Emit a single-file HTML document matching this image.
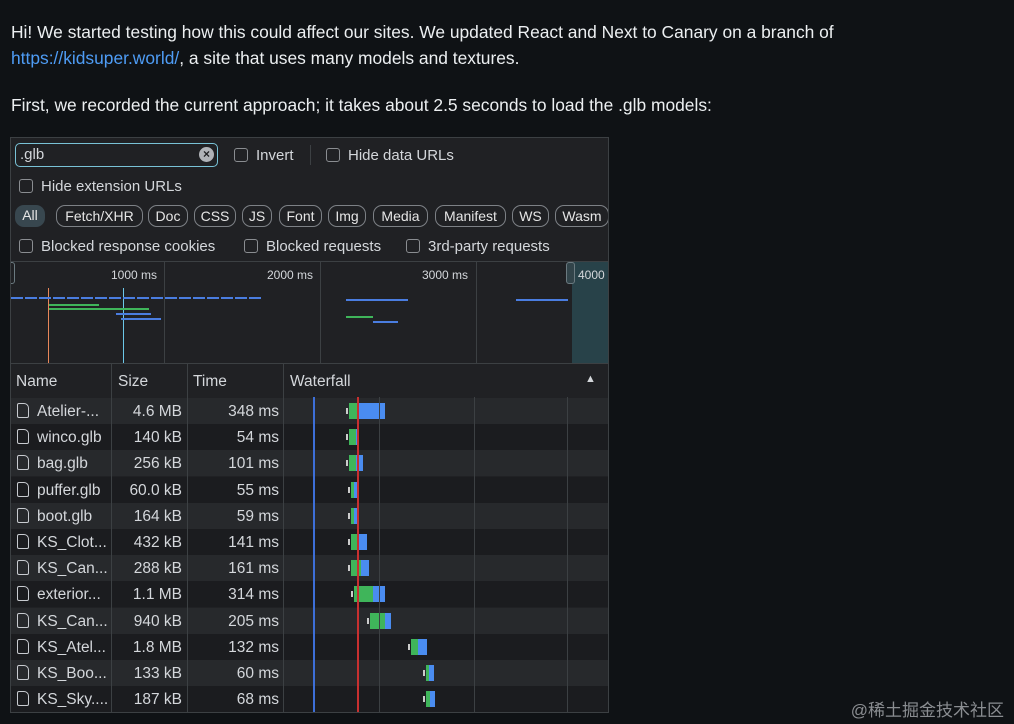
<!DOCTYPE html><html><head><style>
body{margin:0;width:1014px;height:724px;background:#0f1215;font-family:"Liberation Sans",sans-serif;color:#e6e6e6;position:relative;overflow:hidden}
p{position:absolute;left:11px;margin:0;font-size:17.4px;line-height:26px;color:#eceff1}
a{color:#4e9cf5}
.pn{position:absolute;left:10px;top:137px;width:599px;height:576px;background:#202124;border:1px solid #3c4043;box-sizing:border-box;overflow:hidden;font-size:15px;color:#d4d7db}
.ab{position:absolute;white-space:nowrap}
.cb{display:inline-block;width:14px;height:14px;border:1px solid #8a8d91;border-radius:3px;vertical-align:-2px;margin-right:8px;box-sizing:border-box}
.chip{position:absolute;top:67px;height:22px;border:1px solid #7d8186;border-radius:9px;box-sizing:border-box;font-size:14px;line-height:20px;text-align:center;color:#e6e6e6}
.row{position:absolute;left:0;width:599px;height:26px;font-size:15.5px}
.hd{position:absolute;top:225px;left:0;width:599px;height:34px;border-top:1px solid #3c4043;border-bottom:1px solid #3c4043;font-size:15.5px}
.vl{position:absolute;width:1px;background:#3c4043}
.bar{position:absolute;height:16px;top:5px}
.doc{position:absolute;left:6px;top:5px;width:12px;height:15px;border:1.5px solid #c8cbd0;border-radius:2px 5px 2px 2px;box-sizing:border-box}
</style></head><body>
<p style="top:19px">Hi! We started testing how this could affect our sites. We updated React and Next to Canary on a branch of<br><a>https://kidsuper.world/</a>, a site that uses many models and textures.</p>
<p style="top:92px">First, we recorded the current approach; it takes about 2.5 seconds to load the .glb models:</p>
<div class="pn">
<div class="ab" style="left:4px;top:5px;width:203px;height:24px;border:1.5px solid #79c2d6;border-radius:5px;box-sizing:border-box;padding-left:4px;line-height:22px;font-size:15px">.glb<span style="position:absolute;right:3px;top:3px;width:15px;height:15px;border-radius:50%;background:#b0b3b8;color:#202124;font-size:12px;line-height:15px;text-align:center;font-weight:bold">×</span></div>
<div class="ab" style="left:223px;top:9px"><span class="cb"></span>Invert</div>
<div class="vl" style="left:299px;top:7px;height:20px"></div>
<div class="ab" style="left:315px;top:9px"><span class="cb"></span>Hide data URLs</div>
<div class="ab" style="left:8px;top:40px"><span class="cb"></span>Hide extension URLs</div>
<div class="chip" style="left:4px;width:30px;border:none;background:#38474f">All</div>
<div class="chip" style="left:45px;width:87px">Fetch/XHR</div>
<div class="chip" style="left:137px;width:40px">Doc</div>
<div class="chip" style="left:183px;width:42px">CSS</div>
<div class="chip" style="left:231px;width:30px">JS</div>
<div class="chip" style="left:268px;width:43px">Font</div>
<div class="chip" style="left:317px;width:38px">Img</div>
<div class="chip" style="left:362px;width:55px">Media</div>
<div class="chip" style="left:424px;width:71px">Manifest</div>
<div class="chip" style="left:501px;width:37px">WS</div>
<div class="chip" style="left:544px;width:54px">Wasm</div>
<div class="ab" style="left:8px;top:100px"><span class="cb"></span>Blocked response cookies</div>
<div class="ab" style="left:233px;top:100px"><span class="cb"></span>Blocked requests</div>
<div class="ab" style="left:395px;top:100px"><span class="cb"></span>3rd-party requests</div>
<div style="position:absolute;left:0;top:123px;width:599px;height:1px;background:#3c4043"></div>
<div class="vl" style="left:153px;top:124px;height:101px"></div>
<div class="vl" style="left:309px;top:124px;height:101px"></div>
<div class="vl" style="left:465px;top:124px;height:101px"></div>
<div style="position:absolute;left:561px;top:124px;width:40px;height:101px;background:#284249"></div>
<div style="position:absolute;left:555px;top:124px;width:9px;height:22px;border:1px solid #6b7a80;border-radius:3px;background:#32444a;box-sizing:border-box"></div>
<div style="position:absolute;left:-5px;top:124px;width:9px;height:22px;border:1px solid #6b7a80;border-radius:3px;box-sizing:border-box"></div>
<div class="ab" style="left:100px;top:130px;font-size:12px">1000 ms</div>
<div class="ab" style="left:256px;top:130px;font-size:12px">2000 ms</div>
<div class="ab" style="left:411px;top:130px;font-size:12px">3000 ms</div>
<div class="ab" style="left:567px;top:130px;font-size:12px">4000</div>
<div style="position:absolute;left:37px;top:150px;width:1px;height:75px;background:#e8875a"></div>
<div style="position:absolute;left:112px;top:150px;width:1px;height:75px;background:#6cc8e8"></div>
<div style="position:absolute;left:0;top:159px;width:252px;height:2px;background:repeating-linear-gradient(90deg,#4a7de0 0 12px,transparent 12px 14px)"></div>
<div style="position:absolute;left:38px;top:166px;width:50px;height:2px;background:#3fb55a"></div>
<div style="position:absolute;left:38px;top:170px;width:100px;height:2px;background:#3fb55a"></div>
<div style="position:absolute;left:105px;top:175px;width:35px;height:2px;background:#4a7de0"></div>
<div style="position:absolute;left:110px;top:180px;width:40px;height:2px;background:#4a7de0"></div>
<div style="position:absolute;left:335px;top:161px;width:62px;height:2px;background:#4a7de0"></div>
<div style="position:absolute;left:335px;top:178px;width:27px;height:2px;background:#3fb55a"></div>
<div style="position:absolute;left:362px;top:183px;width:25px;height:2px;background:#4a7de0"></div>
<div style="position:absolute;left:505px;top:161px;width:52px;height:2px;background:#4a7de0"></div>
<div class="hd"><div class="ab" style="left:5px;top:9px">Name</div><div class="ab" style="left:107px;top:9px">Size</div><div class="ab" style="left:182px;top:9px">Time</div><div class="ab" style="left:279px;top:9px">Waterfall</div><div class="ab" style="left:574px;top:9px;font-size:11px">▲</div></div>
<div id="rows"></div>
<div class="vl" style="left:100px;top:225px;height:351px"></div>
<div class="vl" style="left:176px;top:225px;height:351px"></div>
<div class="vl" style="left:272px;top:225px;height:351px"></div>
<div class="vl" style="left:368px;top:259px;height:317px"></div>
<div class="vl" style="left:463px;top:259px;height:317px"></div>
<div class="vl" style="left:556px;top:259px;height:317px"></div>
<div style="position:absolute;left:302px;top:259px;width:1.5px;height:317px;background:#3d6fd8"></div>
<div style="position:absolute;left:346px;top:259px;width:1.5px;height:317px;background:#c83030"></div>
</div>
<div style="position:absolute;right:10px;top:696px;font-size:17px;color:#8a8d91;font-family:'Liberation Sans','Noto Sans CJK SC',sans-serif">@稀土掘金技术社区</div>
<script>
var d=[["Atelier-...","4.6 MB","348 ms",338,348,374],["winco.glb","140 kB","54 ms",338,345,346],["bag.glb","256 kB","101 ms",338,345,352],["puffer.glb","60.0 kB","55 ms",340,343,347],["boot.glb","164 kB","59 ms",340,343,348],["KS_Clot...","432 kB","141 ms",340,348,356],["KS_Can...","288 kB","161 ms",340,350,358],["exterior...","1.1 MB","314 ms",343,362,374],["KS_Can...","940 kB","205 ms",359,374,380],["KS_Atel...","1.8 MB","132 ms",400,407,416],["KS_Boo...","133 kB","60 ms",415,418,423],["KS_Sky....","187 kB","68 ms",415,419,424]];
var h="";d.forEach(function(r,i){var t=260+i*26.2;var a=r[3],b=r[4],c=r[5];h+='<div class="row" style="top:'+t+'px;background:'+(i%2?'#1b1c1f':'#27292c')+'"><span class="doc"></span><span class="ab" style="left:26px;top:5px">'+r[0]+'</span><span class="ab" style="right:428px;top:5px">'+r[1]+'</span><span class="ab" style="right:331px;top:5px">'+r[2]+'</span><span class="bar" style="left:'+(a-3)+'px;width:2px;height:6px;top:10px;background:#ccc"></span><span class="bar" style="left:'+a+'px;width:'+(b-a)+'px;background:#3fb55a"></span><span class="bar" style="left:'+b+'px;width:'+(c-b)+'px;background:#4a8cf0"></span></div>'});document.getElementById("rows").innerHTML=h;
</script>
</body></html>
